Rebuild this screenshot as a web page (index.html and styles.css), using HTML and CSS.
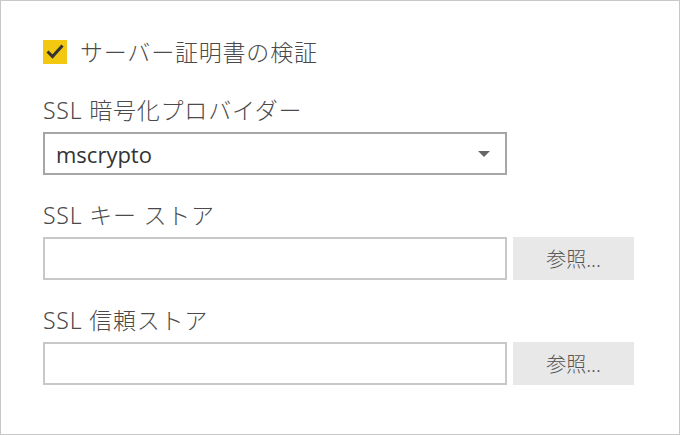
FILE: index.html
```html
<!DOCTYPE html>
<html lang="ja">
<head>
<meta charset="utf-8">
<link rel="stylesheet" href="styles.css">
</head>
<body>
<div class="frame">
  <label class="check-row">
    <span class="checkbox">
      <svg width="24" height="24" viewBox="0 0 24 24"><path d="M4.5 11.5 L9.5 16.5 L19.5 5.5" fill="none" stroke="#333" stroke-width="3"/></svg>
    </span>
    <span class="check-label">サーバー証明書の検証</span>
  </label>

  <div class="section first">
    <div class="label">SSL 暗号化プロバイダー</div>
    <div class="select">
      <span class="select-value">mscrypto</span>
      <span class="arrow"></span>
    </div>
  </div>

  <div class="section">
    <div class="label">SSL キー ストア</div>
    <div class="field-row">
      <div class="textbox"></div>
      <div class="button">参照...</div>
    </div>
  </div>

  <div class="section">
    <div class="label">SSL 信頼ストア</div>
    <div class="field-row">
      <div class="textbox"></div>
      <div class="button">参照...</div>
    </div>
  </div>
</div>
</body>
</html>
```

FILE: styles.css
```css
* { box-sizing: border-box; }
html, body { margin: 0; padding: 0; background: #fff; }
body {
  font-family: "Noto Sans", "Noto Sans CJK JP", sans-serif;
  color: #4a4a4a;
}
.frame {
  width: 680px;
  height: 435px;
  border: 1px solid #c8c8c8;
  padding: 39px 0 0 42px;
}
.check-row {
  display: flex;
  align-items: center;
  height: 24px;
}
.checkbox {
  width: 24px;
  height: 24px;
  background: #f2c811;
  display: block;
}
.checkbox svg { display: block; }
.check-label {
  margin-left: 13px;
  font-size: 23px;
  line-height: 24px;
  font-weight: 300;
  letter-spacing: 0.8px;
  color: #4a4a4a;
}
.section { margin-top: 25px; }
.section.first { margin-top: 31px; }
.label {
  font-size: 23px;
  line-height: 30px;
  font-weight: 300;
  letter-spacing: 0.8px;
  color: #4a4a4a;
  margin-bottom: 7px;
}
.select {
  position: relative;
  width: 464px;
  height: 43px;
  border: 2px solid #a6a6a6;
  display: flex;
  align-items: center;
  padding-left: 11px;
}
.select-value {
  font-family: "Open Sans", "Noto Sans", sans-serif;
  font-size: 22px;
  line-height: 30px;
  color: #333;
}
.arrow {
  position: absolute;
  right: 15px;
  top: 17px;
  width: 0;
  height: 0;
  border-left: 6px solid transparent;
  border-right: 6px solid transparent;
  border-top: 6px solid #666;
}
.field-row {
  display: flex;
  align-items: flex-start;
}
.textbox {
  width: 464px;
  height: 43px;
  border: 2px solid #c8c8c8;
}
.button {
  margin-left: 6px;
  width: 121px;
  height: 43px;
  background: #e8e8e8;
  display: flex;
  align-items: center;
  justify-content: center;
  font-size: 20px;
  color: #555;
  font-weight: 300;
}
```
